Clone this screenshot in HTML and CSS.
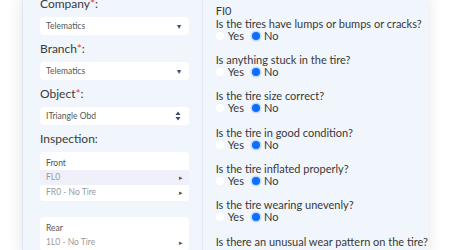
FILE: index.html
```html
<html>
<head>
<link rel="stylesheet" href="styles.css">
</head>
<body>
<div class="sheet">
  <div class="filters">
    <div class="field-label">Company<span class="req">*</span>:</div>
    <div class="picker">Telematics<span class="caret">&#9662;</span></div>

    <div class="field-label">Branch<span class="req">*</span>:</div>
    <div class="picker">Telematics<span class="caret">&#9662;</span></div>

    <div class="field-label">Object<span class="req">*</span>:</div>
    <div class="picker">ITriangle Obd
      <svg class="updown" width="6" height="10" viewBox="0 0 6 10"><path d="M3 0.5 L5.5 4 H0.5 Z M3 9.5 L5.5 6 H0.5 Z" fill="#3d4a68"/></svg>
    </div>

    <div class="field-label">Inspection:</div>
    <div class="axle">
      <div class="axle-title">Front</div>
      <div class="tire active">FL0<span class="go">&#9656;</span></div>
      <div class="tire">FR0 - No Tire<span class="go">&#9656;</span></div>
    </div>
    <div class="axle">
      <div class="axle-title">Rear</div>
      <div class="tire">1L0 - No Tire<span class="go">&#9656;</span></div>
    </div>
  </div>

  <div class="questions">
    <div class="tire-name">FI0</div>

    <div class="question">
      <div class="q-text">Is the tires have lumps or bumps or cracks?</div>
      <div class="answers">
        <label><input type="radio" name="q1"> Yes</label>
        <label><input type="radio" name="q1" checked> No</label>
      </div>
    </div>
    <div class="question">
      <div class="q-text">Is anything stuck in the tire?</div>
      <div class="answers">
        <label><input type="radio" name="q2"> Yes</label>
        <label><input type="radio" name="q2" checked> No</label>
      </div>
    </div>
    <div class="question">
      <div class="q-text">Is the tire size correct?</div>
      <div class="answers">
        <label><input type="radio" name="q3"> Yes</label>
        <label><input type="radio" name="q3" checked> No</label>
      </div>
    </div>
    <div class="question">
      <div class="q-text">Is the tire in good condition?</div>
      <div class="answers">
        <label><input type="radio" name="q4"> Yes</label>
        <label><input type="radio" name="q4" checked> No</label>
      </div>
    </div>
    <div class="question">
      <div class="q-text">Is the tire inflated properly?</div>
      <div class="answers">
        <label><input type="radio" name="q5"> Yes</label>
        <label><input type="radio" name="q5" checked> No</label>
      </div>
    </div>
    <div class="question">
      <div class="q-text">Is the tire wearing unevenly?</div>
      <div class="answers">
        <label><input type="radio" name="q6"> Yes</label>
        <label><input type="radio" name="q6" checked> No</label>
      </div>
    </div>
    <div class="question">
      <div class="q-text">Is there an unusual wear pattern on the tire?</div>
    </div>
  </div>
</div>
</body>
</html>
```

FILE: styles.css
```css
html, body { margin:0; background:#fff; }
body { font-family:Lato, "Noto Sans", sans-serif; color:#383838; overflow:hidden; height:250px; }

.sheet
{
  display:flex;
  margin:-4px 0 0 22px;
  width:405px;
  height:260px;
  background:#f1f6fd;
  border-left:1px solid #e1e7f0;
  box-shadow:0 0 14px rgba(40,50,70,0.13);
}

.filters
{
  width:151px;
  padding:0 13px 0 17px;
  border-right:1px solid #e3e9f2;
}
.field-label { font-size:12px; line-height:16px; margin-bottom:5px; color:#3a3a3a; }
.req { color:#e8413c; }

.picker
{
  position:relative;
  height:18px;
  line-height:18px;
  margin-bottom:6px;
  padding-left:6px;
  background:#fff;
  border-radius:4px;
  font-size:8.5px;
  color:#555;
}
.caret
{
  position:absolute;
  right:8px;
  top:0;
  font-size:8px;
  color:#3d4a68;
}
.updown { position:absolute; right:8px; top:4px; }

.axle
{
  background:#fff;
  border-radius:4px;
  padding:4px 0 1px;
  margin-bottom:16px;
  font-size:8.5px;
}
.axle-title { line-height:14px; padding-left:6px; color:#555; }
.tire
{
  position:relative;
  line-height:15px;
  padding-left:6px;
  color:#999;
}
.tire.active { background:#f0f0fa; }
.go { position:absolute; right:6px; top:0; font-size:7px; color:#555; }

.questions { padding:7.5px 0 0 13px; font-size:11px; white-space:nowrap; }
.tire-name, .q-text { line-height:13px; }
.question { margin-bottom:11.4px; }
.answers { display:flex; gap:8px; line-height:12px; }
.answers label { display:flex; align-items:center; gap:4px; }
.answers input
{
  appearance:none;
  margin:0;
  width:8px;
  height:8px;
  border-radius:50%;
  background:#fff;
}
.answers input:checked
{
  background:#0d6efd;
  box-shadow:0 0 0 1.5px #c4dafd;
}
```
